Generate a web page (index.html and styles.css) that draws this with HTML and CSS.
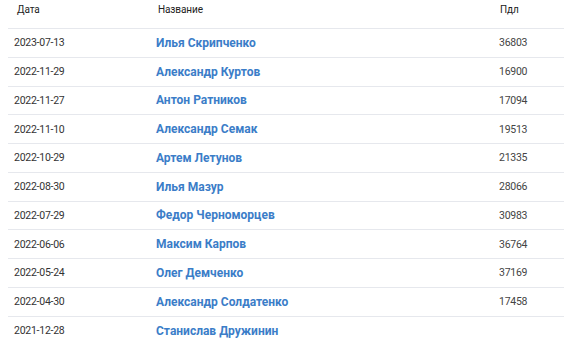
FILE: index.html
```
<!DOCTYPE html>
<html lang="ru">
<head>
<meta charset="utf-8">
<link rel="stylesheet" href="styles.css">
</head>
<body>
<div class="list">
  <div class="row head"><div class="c-date">Дата</div><div class="c-name">Название</div><div class="c-num">Пдл</div></div>
  <div class="row"><div class="c-date">2023-07-13</div><div class="c-name"><a href="#">Илья Скрипченко</a></div><div class="c-num">36803</div></div>
  <div class="row"><div class="c-date">2022-11-29</div><div class="c-name"><a href="#">Александр Куртов</a></div><div class="c-num">16900</div></div>
  <div class="row"><div class="c-date">2022-11-27</div><div class="c-name"><a href="#">Антон Ратников</a></div><div class="c-num">17094</div></div>
  <div class="row"><div class="c-date">2022-11-10</div><div class="c-name"><a href="#">Александр Семак</a></div><div class="c-num">19513</div></div>
  <div class="row"><div class="c-date">2022-10-29</div><div class="c-name"><a href="#">Артем Летунов</a></div><div class="c-num">21335</div></div>
  <div class="row"><div class="c-date">2022-08-30</div><div class="c-name"><a href="#">Илья Мазур</a></div><div class="c-num">28066</div></div>
  <div class="row"><div class="c-date">2022-07-29</div><div class="c-name"><a href="#">Федор Черноморцев</a></div><div class="c-num">30983</div></div>
  <div class="row"><div class="c-date">2022-06-06</div><div class="c-name"><a href="#">Максим Карпов</a></div><div class="c-num">36764</div></div>
  <div class="row"><div class="c-date">2022-05-24</div><div class="c-name"><a href="#">Олег Демченко</a></div><div class="c-num">37169</div></div>
  <div class="row"><div class="c-date">2022-04-30</div><div class="c-name"><a href="#">Александр Солдатенко</a></div><div class="c-num">17458</div></div>
  <div class="row last"><div class="c-date">2021-12-28</div><div class="c-name"><a href="#">Станислав Дружинин</a></div><div class="c-num"></div></div>
</div>
</body>
</html>
```
FILE: styles.css
```
html, body { margin: 0; padding: 0; background: #fff; }
body { font-family: Roboto, "Noto Sans", sans-serif; color: #333; }
.list { margin-left: 8px; }
.row {
  display: grid;
  grid-template-columns: 142px 343px 1fr;
  align-items: center;
  box-sizing: border-box;
  height: 28.75px;
  border-bottom: 1px solid #e6e8ed;
  font-size: 10.5px;
  letter-spacing: -0.25px;
  color: #333;
}
.row.last { border-bottom: none; }
.row.head {
  height: 29px;
  align-items: start;
  padding-top: 4px;
  font-size: 10px;
  letter-spacing: -0.1px;
  color: #222;
}
.c-date { padding-left: 6px; }
.c-name { padding-left: 6px; }
.c-num { padding-left: 6px; color: #444; }
.head .c-date { padding-left: 9px; }
.head .c-name { padding-left: 8px; }
.head .c-num { padding-left: 7px; color: #222; }
.c-name a {
  color: #3b7dc8;
  font-weight: bold;
  font-size: 12px;
  letter-spacing: 0;
  text-decoration: none;
}
```
